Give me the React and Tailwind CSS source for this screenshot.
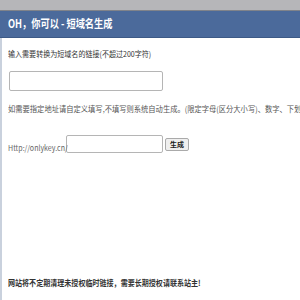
import React from 'react';

const App = () => {
  return (
    <div
      className="w-[300px] h-[300px] overflow-hidden bg-white"
      style={{ fontFamily: '"Noto Sans CJK SC", "Liberation Sans", sans-serif' }}
    >
      {/* top strip */}
      <div className="h-[11px] bg-[#b6b6b9] border-b border-[#80838a]" />

      {/* title bar */}
      <div className="h-[27px] bg-[#4b6a9b] border-b border-[#3d5a86] flex items-center px-[8px]">
        <h1 className="inline-block origin-left scale-x-[0.8] text-white text-[11.5px] font-bold leading-none whitespace-nowrap">
          OH，你可以 - 短域名生成
        </h1>
      </div>

      <div className="border-l-2 border-[#c9d1dd] h-[262px] pl-[6px] flex flex-col items-start">
        <p className="mt-[10px] inline-block origin-left scale-x-[0.88] text-[8px] leading-[12px] text-[#333] whitespace-nowrap">
          输入需要转换为短域名的链接(不超过200字符)
        </p>
        <input
          type="text"
          className="mt-[11px] ml-[1px] w-[154px] h-[20px] border border-[#b5b5b5] rounded-[2px] bg-white"
        />
        <p className="mt-[12px] inline-block origin-left scale-x-[0.91] text-[8px] leading-[12px] text-[#555] whitespace-nowrap">
          如需要指定地址请自定义填写,不填写则系统自动生成。(限定字母(区分大小写)、数字、下划线)
        </p>
        <div className="mt-[17px] flex items-center">
          <span className="w-[58px] whitespace-nowrap">
            <span className="inline-block origin-left scale-x-[0.88] text-[8px] text-[#666] leading-none">
              Http://onlykey.cn/
            </span>
          </span>
          <input
            type="text"
            className="w-[97px] h-[18px] border border-[#b5b5b5] rounded-[2px] bg-white"
          />
          <button className="ml-[2px] h-[13px] w-[24px] border border-[#aaa] bg-[#efefef] rounded-[2px] text-[7px] font-bold leading-none text-[#222]">
            生成
          </button>
        </div>
        <p className="mt-auto mb-[11px] inline-block origin-left scale-x-[0.88] text-[8px] font-bold leading-[12px] text-[#333] whitespace-nowrap">
          网站将不定期清理未授权临时链接，需要长期授权请联系站主!
        </p>
      </div>
    </div>
  );
};

export default App;
